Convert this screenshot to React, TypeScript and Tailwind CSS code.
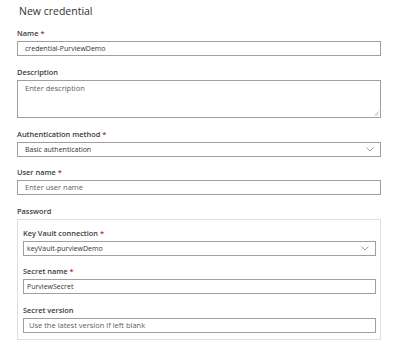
import React from 'react';

const Req: React.FC = () => <span className="text-[#a4262c] ml-[2px]">*</span>;

const Label: React.FC<{ text: string; required?: boolean }> = ({ text, required }) => (
  <div className="h-[12px] leading-[12px] text-[7.4px] font-semibold text-[#3b3a39] mb-[2px]">
    {text}
    {required && <Req />}
  </div>
);

const Chevron: React.FC = () => (
  <svg width="8" height="5" viewBox="0 0 8 5" className="shrink-0">
    <path d="M0.5 0.5 L4 4 L7.5 0.5" fill="none" stroke="#8a8886" strokeWidth="0.8" />
  </svg>
);

const Box: React.FC<{ value?: string; placeholder?: string; select?: boolean; inner?: boolean }> = ({
  value,
  placeholder,
  select,
  inner,
}) => (
  <div
    className={`h-[15px] border border-[#a19f9d] bg-white flex items-center justify-between leading-[13px] ${
      inner ? 'pl-[3px] pr-[6px]' : 'pl-[7px] pr-[6px]'
    }`}
  >
    {value ? (
      <span className="text-[7px] text-[#323130]">{value}</span>
    ) : (
      <span className={`text-[7.5px] text-[#605e5c] ${inner ? 'pl-[2px]' : ''}`}>{placeholder}</span>
    )}
    {select && <Chevron />}
  </div>
);

export default function App() {
  return (
    <div
      className="w-[400px] h-[349px] bg-white pl-[17px] pr-[19px] pt-[3px]"
      style={{ fontFamily: '"Open Sans", "Noto Sans", sans-serif' }}
    >
      <div className="h-[16px] leading-[16px] text-[10.5px] text-[#323130] pl-[2px]">New credential</div>

      <div className="mt-[8px]">
        <Label text="Name" required />
        <Box value="credential-PurviewDemo" />
      </div>

      <div className="mt-[10px]">
        <Label text="Description" />
        <div className="relative h-[38px] border border-[#a19f9d] bg-white pl-[7px] pt-[1px] leading-[13px] text-[7.5px] text-[#605e5c]">
          Enter description
          <svg width="5" height="5" viewBox="0 0 5 5" className="absolute right-[1px] bottom-[1px]">
            <path d="M4.5 0.5 L0.5 4.5 M4.5 2.5 L2.5 4.5" stroke="#a19f9d" strokeWidth="0.7" />
          </svg>
        </div>
      </div>

      <div className="mt-[10px]">
        <Label text="Authentication method" required />
        <Box value="Basic authentication" select />
      </div>

      <div className="mt-[9px]">
        <Label text="User name" required />
        <Box placeholder="Enter user name" />
      </div>

      <div className="mt-[10px]">
        <Label text="Password" />
        <div className="h-[121px] border border-[#e1dfdd] pl-[5px] pr-[4px] pt-[7px]">
          <Label text="Key Vault connection" required />
          <Box value="keyVault-purviewDemo" select inner />

          <div className="mt-[9px]">
            <Label text="Secret name" required />
            <Box value="PurviewSecret" inner />
          </div>

          <div className="mt-[10px]">
            <Label text="Secret version" />
            <Box placeholder="Use the latest version if left blank" inner />
          </div>
        </div>
      </div>
    </div>
  );
}
